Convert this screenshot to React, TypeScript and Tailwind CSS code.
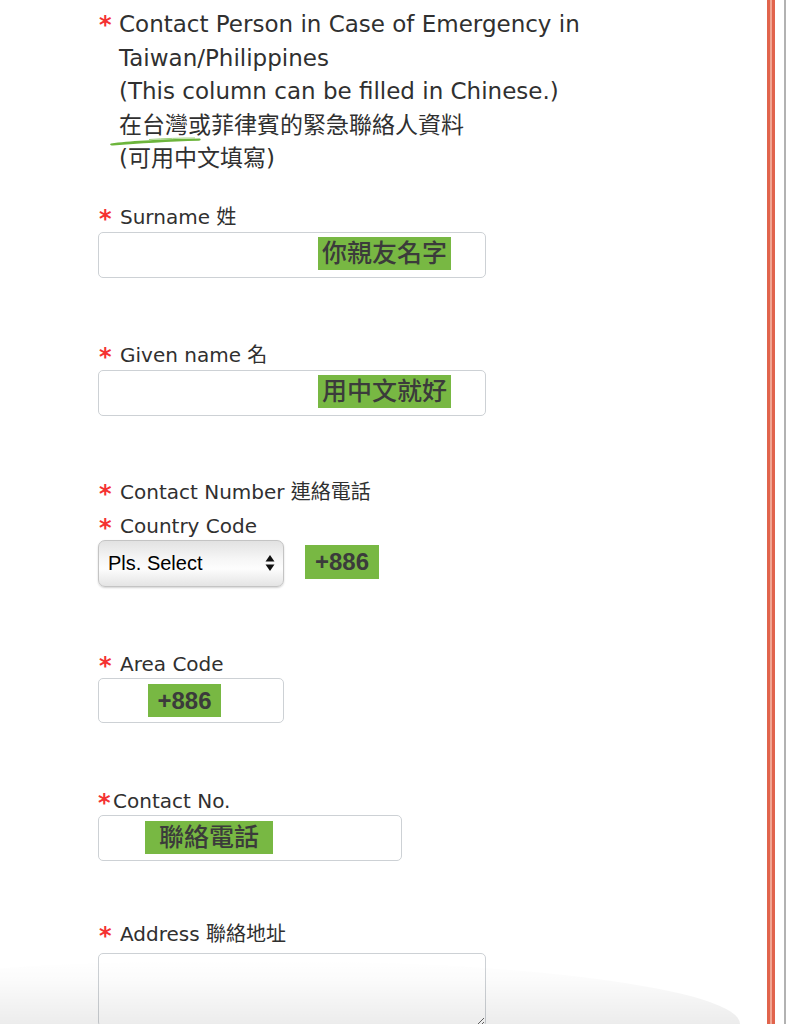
import React from 'react'

// Required-field label: red asterisk + text
const FieldLabel = ({ text, tight = false, className = '' }: { text: string; tight?: boolean; className?: string }) => (
  <div className={`flex items-baseline text-[20px] leading-[28px] ${className}`}>
    <span className={tight ? 'w-[15px] translate-y-[3px] text-[24px] leading-[20px] font-bold text-[#f43232]' : 'w-[22px] translate-y-[3px] pl-[1px] text-[24px] leading-[20px] font-bold text-[#f43232]'}>*</span>
    <span>{text}</span>
  </div>
)

// Green annotation marker
const Marker = ({ children, className = '' }: { children: React.ReactNode; className?: string }) => (
  <span className={`inline-block bg-[#78b843] text-[#3b3b3b] ${className}`}>{children}</span>
)

const App = () => {
  return (
    <div className="relative flex h-[1024px] w-[803px] overflow-hidden bg-white font-['DejaVu_Sans','Noto_Sans_CJK_TC',sans-serif] text-[#303030]">
      {/* Form column */}
      <main className="w-[767px] pl-[98px] pt-[8px]">
        {/* Section title */}
        <section className="relative flex text-[23px] leading-[33.5px]">
          <span className="w-[21px] shrink-0 translate-y-[1px] pl-[1px] text-[24px] font-bold text-[#f43232]">*</span>
          <div>
            <p>Contact Person in Case of Emergency in</p>
            <p>Taiwan/Philippines</p>
            <p>(This column can be filled in Chinese.)</p>
            <p>在台灣或菲律賓的緊急聯絡人資料</p>
            <p>(可用中文填寫)</p>
          </div>
          {/* hand-drawn underline */}
          <svg className="pointer-events-none absolute left-[11px] top-[125px]" width="94" height="14" viewBox="0 0 94 14">
            <path d="M2 10.5 C 20 8, 45 6.5, 90 5.5 C 92 5.4, 92.5 7.5, 90 7.8 C 60 8.5, 30 10.5, 4 12.6 C 1 12.8, 0.5 10.8, 2 10.5 Z" fill="#6db53c" />
            <path d="M40 6.5 C 55 5.5, 72 5, 86 5" stroke="#9fd27b" strokeWidth="1" fill="none" />
          </svg>
        </section>

        {/* Surname */}
        <FieldLabel text="Surname 姓" className="mt-[27px]" />
        <div className="mt-[1px] h-[46px] w-[388px] rounded-[5px] border border-[#cdd1d5] pl-[219px] pt-[4px]">
          <Marker className="px-[4px] text-[25px] font-medium leading-[33px]">你親友名字</Marker>
        </div>

        {/* Given name */}
        <FieldLabel text="Given name 名" className="mt-[63px]" />
        <div className="mt-[1px] h-[46px] w-[388px] rounded-[5px] border border-[#cdd1d5] pl-[219px] pt-[4px]">
          <Marker className="px-[4px] text-[25px] font-medium leading-[33px]">用中文就好</Marker>
        </div>

        {/* Contact number */}
        <FieldLabel text="Contact Number 連絡電話" className="mt-[62px]" />
        <FieldLabel text="Country Code" className="mt-[6px]" />
        <div className="flex items-start gap-[21px]">
          <div className="flex h-[47px] w-[186px] items-center justify-between rounded-[7px] border border-[#c4c4c4] bg-[linear-gradient(to_bottom,#e2e2e2,#f6f6f6_40%,#fdfdfd_62%,#e4e4e4)] pl-[9px] pr-[8px] font-['Liberation_Sans',Arial,sans-serif] text-[20px] text-black shadow-[0_1px_2px_rgba(0,0,0,0.18)]">
            <span>Pls. Select</span>
            <svg width="10" height="18" viewBox="0 0 10 18">
              <path d="M5 1 L9.5 7.5 L0.5 7.5 Z" fill="#111" />
              <path d="M0.5 10.5 L9.5 10.5 L5 17 Z" fill="#111" />
            </svg>
          </div>
          <Marker className="mt-[5px] w-[74px] text-center font-['Liberation_Sans',Arial,sans-serif] text-[24px] font-bold leading-[34px]">+886</Marker>
        </div>

        {/* Area code */}
        <FieldLabel text="Area Code" className="mt-[63px]" />
        <div className="h-[45px] w-[186px] rounded-[5px] border border-[#cdd1d5] pl-[49px] pt-[5px]">
          <Marker className="w-[73px] text-center font-['Liberation_Sans',Arial,sans-serif] text-[24px] font-bold leading-[33px]">+886</Marker>
        </div>

        {/* Contact no. */}
        <FieldLabel text="Contact No." tight className="mt-[64px]" />
        <div className="h-[46px] w-[304px] rounded-[5px] border border-[#cdd1d5] pl-[46px] pt-[5px]">
          <Marker className="px-[14px] text-[25px] font-medium leading-[33px]">聯絡電話</Marker>
        </div>

        {/* Address */}
        <FieldLabel text="Address 聯絡地址" className="mt-[59px]" />
        <textarea className="mt-[5px] block h-[74px] w-[388px] rounded-[5px] border border-[#cdd1d5] bg-white" />
      </main>

      {/* Right page edge */}
      <div className="flex h-full">
        <div className="w-[3px] bg-[#e1644c]" />
        <div className="w-[2px] bg-[#f1a592]" />
        <div className="w-[3px] bg-[#e1644c]" />
      </div>
      <div className="ml-[9px] h-full w-[2px] bg-[#b2b2b2]" />

      {/* soft bottom shading */}
      <div className="pointer-events-none absolute bottom-0 left-[-250px] h-[64px] w-[990px] rounded-[50%_50%_0_0/100%_100%_0_0] bg-[linear-gradient(to_bottom,rgba(0,0,0,0),rgba(0,0,0,0.015)_30%,rgba(0,0,0,0.075))]" />
    </div>
  )
}

export default App
